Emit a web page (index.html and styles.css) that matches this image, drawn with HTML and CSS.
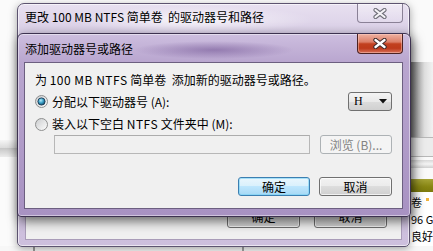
FILE: index.html
```html
<!DOCTYPE html>
<html>
<head>
  <meta charset="utf-8">
  <title>添加驱动器号或路径</title>
  <link rel="stylesheet" href="styles.css">
</head>
<body>
  <div class="desk">
    <div class="bg-left">
      <div class="bg-left-band"></div>
    </div>

    <div class="bg-right">
      <div class="br-shade"></div>
      <div class="br-box"></div>
      <div class="br-bar"></div>
      <div class="br-olive"></div>
      <div class="br-text">
        <div>卷<span class="br-mark"></span></div>
        <div>96 G</div>
        <div>良好</div>
      </div>
    </div>

    <div class="bg-bottom">
      <div class="bb-hatch"></div>
      <div class="bb-line"></div>
      <div class="bb-gap"></div>
      <div class="bb-line"></div>
    </div>

    <!-- parent window, inactive -->
    <div class="win win-back">
      <div class="titlebar">
        <span class="title">更改 100 MB NTFS 简单卷 &nbsp;的驱动器号和路径</span>
        <button class="close inactive" title="关闭">
          <svg viewBox="0 0 14 11" width="14" height="11">
            <path d="M2.5,2 L11.5,9 M11.5,2 L2.5,9" stroke="#6f6f78" stroke-width="4.2" stroke-linecap="round"/>
            <path d="M2.5,2 L11.5,9 M11.5,2 L2.5,9" stroke="#f4f2f6" stroke-width="2.2" stroke-linecap="round"/>
          </svg>
        </button>
      </div>
      <div class="client back-client">
        <div class="actions back-actions">
          <button class="btn">确定</button>
          <button class="btn">取消</button>
        </div>
      </div>
    </div>

    <!-- active dialog -->
    <div class="win win-front">
      <div class="titlebar front-titlebar">
        <span class="title">添加驱动器号或路径</span>
        <button class="close active" title="关闭">
          <svg viewBox="0 0 14 11" width="14" height="11">
            <path d="M2.5,2 L11.5,9 M11.5,2 L2.5,9" stroke="#3d2a2a" stroke-width="4.4" stroke-linecap="round"/>
            <path d="M2.5,2 L11.5,9 M11.5,2 L2.5,9" stroke="#ffffff" stroke-width="2.4" stroke-linecap="round"/>
          </svg>
        </button>
      </div>
      <div class="client front-client">
        <div class="intro">为 <span class="lat">100 MB NTFS</span> 简单卷 &nbsp;添加新的驱动器号或路径。</div>

        <div class="row row-letter">
          <label class="radio-label">
            <svg class="radio" viewBox="0 0 13 13" width="13" height="13">
              <defs>
                <linearGradient id="rfill" x1="0" y1="0" x2="1" y2="1">
                  <stop offset="0" stop-color="#c9cbcd"/>
                  <stop offset="1" stop-color="#ffffff"/>
                </linearGradient>
                <radialGradient id="rdot" cx="0.4" cy="0.35" r="0.7">
                  <stop offset="0" stop-color="#b6ecfb"/>
                  <stop offset="0.5" stop-color="#3aa0c8"/>
                  <stop offset="1" stop-color="#12435e"/>
                </radialGradient>
              </defs>
              <circle cx="6.5" cy="6.5" r="6" fill="url(#rfill)" stroke="#8e8f8f"/>
              <circle cx="6.5" cy="6.5" r="3.6" fill="url(#rdot)" stroke="#1b3a55" stroke-width="0.9"/>
            </svg>
            <span>分配以下驱动器号 (A):</span>
          </label>
          <div class="combo">
            <span class="combo-value">H</span>
            <svg viewBox="0 0 8 5" width="8" height="5"><path d="M0,0 H8 L4,4.5 Z" fill="#111"/></svg>
          </div>
        </div>

        <div class="row row-folder">
          <label class="radio-label">
            <svg class="radio" viewBox="0 0 13 13" width="13" height="13">
              <circle cx="6.5" cy="6.5" r="6" fill="url(#rfill)" stroke="#8e8f8f"/>
            </svg>
            <span>装入以下空白 <span class="lat">NTFS</span> 文件夹中 (M):</span>
          </label>
        </div>

        <div class="row row-path">
          <div class="path-input"></div>
          <button class="btn btn-disabled">浏览 (B)...</button>
        </div>

        <div class="actions front-actions">
          <button class="btn btn-default">确定</button>
          <button class="btn">取消</button>
        </div>
      </div>
    </div>
  </div>
</body>
</html>
```

FILE: styles.css
```css
body {
  margin: 0;
  width: 433px;
  height: 251px;
  overflow: hidden;
  background: #fff;
  font-family: "Noto Sans CJK SC", sans-serif;
  font-size: 12px;
  color: #000;
}
.desk {
  position: relative;
  width: 433px;
  height: 251px;
}
button {
  font-family: inherit;
  font-size: 12px;
  padding: 0;
}

/* background windows */
.bg-left {
  position: absolute;
  left: 0;
  top: 0;
  width: 20px;
  height: 251px;
  background: #fbfbfb;
}
.bg-left-band {
  margin-top: 140px;
  height: 17px;
  background: linear-gradient(#f6f6f6, #dcdcdc 45%, #c8c8c8 50%, #ececec);
}
.bg-right {
  position: absolute;
  left: 404px;
  top: 0;
  width: 29px;
  height: 251px;
  background: #fafafa;
  display: flex;
  flex-direction: column;
  overflow: hidden;
}
.br-shade {
  margin-top: 62px;
  height: 75px;
  background: linear-gradient(to right, #5c5c5c, #9a9a9a 35%, #dedede 70%, #f2f2f2);
}
.br-box {
  height: 18px;
  border: 1px solid #b8b8b8;
  border-right: none;
  background: #ececec;
}
.br-bar {
  margin-top: 3px;
  height: 8px;
  background: linear-gradient(#d8d8d8, #f4f4f4 50%, #cfcfcf);
}
.br-olive {
  margin-top: 11px;
  height: 13px;
  background: linear-gradient(#a6a437, #878512 60%, #7c7a0d);
}
.br-text {
  flex: 1;
  background: #fff;
  padding: 2px 0 0 7px;
  line-height: 17px;
  font-size: 11px;
  white-space: nowrap;
}
.br-mark {
  display: inline-block;
  width: 3px;
  height: 3px;
  margin-left: 4px;
  vertical-align: 6px;
  background: #f2b43c;
}
.bg-bottom {
  position: absolute;
  left: 0;
  top: 246px;
  width: 433px;
  height: 5px;
  display: flex;
  background: #f7f7f7;
}
.bb-hatch {
  margin-left: 33px;
  width: 39px;
  border-left: 1px solid #9a9a9a;
  border-right: 1px solid #9a9a9a;
  background: repeating-linear-gradient(45deg, #bdbdbd 0 1px, #eeeeee 1px 3px);
}
.bb-line {
  width: 5px;
  border-left: 1px solid #a0a0a0;
  border-right: 1px solid #a0a0a0;
  margin-left: 207px;
}
.bb-line:first-of-type {
  margin-left: 8px;
}
.bb-gap {
  width: 96px;
}

/* windows */
.win {
  position: absolute;
  display: flex;
  flex-direction: column;
  box-sizing: border-box;
}
.win-back {
  left: 17px;
  top: 3px;
  width: 393px;
  height: 244px;
  border: 1px solid #5d5470;
  border-radius: 7px 7px 5px 5px;
  background:
    radial-gradient(ellipse 120px 14px at 45% 16px, rgba(255, 255, 255, 0.75), rgba(255, 255, 255, 0)),
    linear-gradient(#e8e0f0, #d9cee6 30px, #cdbfdd);
  box-shadow: inset 0 0 0 1px rgba(255, 255, 255, 0.6), 0 2px 8px rgba(0, 0, 0, 0.35);
}
.win-front {
  left: 17px;
  top: 33px;
  width: 394px;
  height: 184px;
  border: 1px solid #3d3250;
  border-radius: 6px 6px 4px 4px;
  background:
    radial-gradient(ellipse 80px 9px at 50% 16px, rgba(110, 80, 145, 0.55), rgba(110, 80, 145, 0)),
    linear-gradient(#cdbedf, #b9a6cf 28px, #a892c2);
  box-shadow: inset 0 0 0 1px rgba(255, 255, 255, 0.45), 2px 4px 12px rgba(0, 0, 0, 0.6);
}
.titlebar {
  display: flex;
  justify-content: space-between;
  align-items: flex-start;
  height: 29px;
  padding: 0 6px 0 7px;
  flex-shrink: 0;
}
.front-titlebar {
  height: 28px;
  padding-right: 7px;
}
.title {
  padding-top: 5px;
  line-height: 16px;
  white-space: pre;
  color: #000;
}
.front-titlebar .title {
  padding-top: 7px;
}
.close {
  width: 46px;
  height: 19px;
  border-radius: 0 0 4px 4px;
  display: flex;
  align-items: center;
  justify-content: center;
  cursor: pointer;
}
.close.inactive {
  border: 1px solid #8a8196;
  border-top: none;
  background: linear-gradient(rgba(255, 255, 255, 0.35), rgba(255, 255, 255, 0.1));
}
.close.active {
  height: 20px;
  border: 1px solid #4c2222;
  border-top: none;
  background: linear-gradient(#eeb1a2, #dc7f68 42%, #c2401f 52%, #bd3a1b 75%, #d9705a);
  box-shadow: inset 0 0 0 1px rgba(255, 210, 200, 0.45);
}

.client {
  flex: 1;
  background: #f0f0f0;
  display: flex;
  flex-direction: column;
}
.back-client {
  margin: 0 7px 6px 7px;
  border: 1px solid #a99cb8;
  justify-content: flex-end;
  padding: 0 14px 11px 0;
}
.front-client {
  margin: 0 7px 7px 6px;
  border: 1px solid #6c5f80;
  padding: 9px 10px 0 10px;
}

.intro {
  line-height: 16px;
  white-space: pre;
}
.lat {
  letter-spacing: 0.5px;
}
.row {
  display: flex;
  align-items: center;
}
.row-letter {
  margin-top: 4px;
  height: 19px;
  justify-content: space-between;
}
.row-folder {
  margin-top: 5px;
  height: 16px;
}
.row-path {
  margin-top: 3px;
  padding-left: 19px;
  gap: 10px;
}
.radio-label {
  display: flex;
  align-items: center;
  gap: 4px;
  line-height: 16px;
  white-space: pre;
}
.radio {
  display: block;
  flex-shrink: 0;
}
.combo {
  box-sizing: border-box;
  width: 44px;
  height: 19px;
  border: 1px solid #707070;
  border-radius: 3px;
  background: linear-gradient(#f4f4f4, #e9e9e9 50%, #dcdcdc 51%, #d0d0d0);
  display: flex;
  align-items: center;
  justify-content: space-between;
  padding: 0 4px 0 5px;
}
.combo-value {
  font-family: "Liberation Serif", serif;
  font-size: 12px;
}
.path-input {
  box-sizing: border-box;
  width: 256px;
  height: 19px;
  border: 1px solid #b7b7b7;
  border-top-color: #acacac;
  background: #f0f0f0;
}

.btn {
  box-sizing: border-box;
  width: 73px;
  height: 19px;
  border: 1px solid #707070;
  border-radius: 3px;
  background: linear-gradient(#f2f2f2, #ebebeb 49%, #dddddd 50%, #cfcfcf);
  box-shadow: inset 0 0 0 1px rgba(255, 255, 255, 0.7);
  color: #000;
  line-height: 16px;
  cursor: pointer;
}
.btn-disabled {
  width: 72px;
  border-color: #adb2b5;
  background: #f4f4f4;
  color: #838383;
  box-shadow: none;
}
.btn-default {
  width: 72px;
  border-color: #3c7fb1;
  background: linear-gradient(#eaf6fd, #d9f0fc 49%, #bee6fd 50%, #a7d9f5);
  box-shadow: inset 0 0 0 1px rgba(120, 210, 245, 0.6);
}
.actions {
  display: flex;
  justify-content: flex-end;
}
.front-actions {
  margin-top: 23px;
  gap: 9px;
}
.back-actions {
  gap: 14px;
}
.back-actions .btn {
  height: 23px;
}
```
